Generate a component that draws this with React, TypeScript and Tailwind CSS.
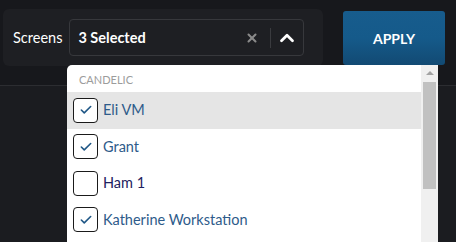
import { X, ChevronUp, Check } from 'lucide-react'

const screens = [
  { name: 'Eli VM', checked: true, active: true },
  { name: 'Grant', checked: true },
  { name: 'Ham 1', checked: false },
  { name: 'Katherine Workstation', checked: true },
]

function Option({ name, checked, active }: { name: string; checked: boolean; active?: boolean }) {
  return (
    <div className={`flex h-[36.5px] shrink-0 items-center gap-[5px] pl-[6px] ${active ? 'bg-[#e5e5e5]' : ''}`}>
      <span className="flex h-[25px] w-[25px] items-center justify-center rounded-[4px] border-[1.5px] border-[#1a1a1a] bg-white">
        {checked && <Check className="h-[14px] w-[14px] text-[#1f5786]" strokeWidth={2.75} />}
      </span>
      <span className={`text-[14.5px] ${checked ? 'text-[#2e5b8a]' : 'text-[#1e2260]'}`}>{name}</span>
    </div>
  )
}

export default function App() {
  return (
    <div className="relative h-[242px] w-[456px] overflow-hidden bg-[#17181c] font-['Lato','Liberation_Sans',sans-serif]">
      <div className="flex h-[86px] items-start gap-5 border-b border-[#2c2d31] pl-[3px] pt-[9px]">
        <div className="flex h-[57px] w-[320px] items-center gap-[7px] rounded-[6px] bg-[#1e1f23] pl-[10px]">
          <span className="text-[14.5px] text-white">Screens</span>
          <div className="flex h-[37px] w-[235px] items-center rounded-[4px] border border-[#37383c] pl-[8px] pr-[5px]">
            <span className="flex-1 text-[14.5px] font-bold text-white">3 Selected</span>
            <X className="h-[14px] w-[14px] text-[#8a8a8a]" strokeWidth={3.5} />
            <span className="ml-[11px] mr-[5px] h-[20px] w-px bg-[#3a3b3f]" />
            <ChevronUp className="h-[22px] w-[22px] text-white" strokeWidth={3} />
          </div>
        </div>
        <button className="mt-[2px] flex h-[54px] w-[102px] items-center justify-center rounded-[3px] bg-gradient-to-b from-[#175c8d] via-[#155a8a] to-[#124a73] text-[14px] font-bold text-white">
          APPLY
        </button>
      </div>
      <div className="h-full bg-[#1b1c20]" />

      <div className="absolute left-[67px] top-[65px] flex h-[200px] w-[371px] rounded-tl-[5px] bg-white">
        <div className="flex flex-1 flex-col overflow-hidden">
          <div className="h-[27px] shrink-0 pl-[12px] pt-[9px] text-[11px] leading-none text-[#9c9c9c]">CANDELIC</div>
          {screens.map((s) => (
            <Option key={s.name} {...s} />
          ))}
        </div>
        <div className="flex w-[17px] flex-col items-center bg-[#f0f0f0]">
          <span className="mt-[6px] h-0 w-0 border-x-[4px] border-b-[4px] border-x-transparent border-b-[#a3a3a3]" />
          <span className="mt-[7px] h-[107px] w-[13px] bg-[#c1c1c1]" />
        </div>
      </div>
    </div>
  )
}
